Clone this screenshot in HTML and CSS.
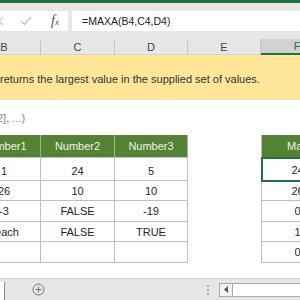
FILE: index.html
```html
<!DOCTYPE html>
<html lang="en">
<head>
  <meta charset="UTF-8" />
  <title>MAXA</title>
  <link rel="stylesheet" href="styles.css">
</head>
<body>
  <div class="ribbon-edge"></div>

  <div class="formula-bar">
    <div class="fx-buttons">
      <svg class="fx-cancel" width="10" height="10" viewBox="0 0 10 10"><path d="M1 1 L9 9 M9 1 L1 9" /></svg>
      <svg class="fx-enter" width="12" height="10" viewBox="0 0 12 10"><path d="M1 5 L4.5 8.5 L11 1" /></svg>
      <span class="fx-label"><i>f</i><small>x</small></span>
    </div>
    <div class="formula-input">=MAXA(B4,C4,D4)</div>
  </div>

  <div class="col-heads">
    <div class="col-head">B</div>
    <div class="col-head">C</div>
    <div class="col-head">D</div>
    <div class="col-head">E</div>
    <div class="col-head active">F</div>
  </div>

  <div class="banner">returns the largest value in the supplied set of values.</div>
  <div class="syntax">2], ...)</div>

  <div class="sheet">
    <div class="data-table">
      <div class="cell head">Number1</div>
      <div class="cell head">Number2</div>
      <div class="cell head">Number3</div>
      <div class="cell">1</div><div class="cell">24</div><div class="cell">5</div>
      <div class="cell">26</div><div class="cell">10</div><div class="cell">10</div>
      <div class="cell">-3</div><div class="cell">FALSE</div><div class="cell">-19</div>
      <div class="cell">peach</div><div class="cell">FALSE</div><div class="cell">TRUE</div>
      <div class="cell"></div><div class="cell"></div><div class="cell"></div>
    </div>
    <div class="result-table">
      <div class="cell head">Max</div>
      <div class="cell selected">24</div>
      <div class="cell">26</div>
      <div class="cell">0</div>
      <div class="cell">1</div>
      <div class="cell">0</div>
    </div>
  </div>

  <div class="sheet-bar">
    <div class="sheet-tab"></div>
    <svg class="add-sheet" width="13" height="13" viewBox="0 0 13 13">
      <circle cx="6.5" cy="6.5" r="5.5" />
      <path d="M6.5 3.5 V9.5 M3.5 6.5 H9.5" />
    </svg>
    <div class="grip"><span></span><span></span><span></span></div>
    <div class="hscroll">
      <div class="hscroll-btn">
        <svg width="5" height="7" viewBox="0 0 5 7"><path d="M4 0 L0 3.5 L4 7 Z" /></svg>
      </div>
      <div class="hscroll-track"></div>
    </div>
  </div>
</body>
</html>
```

FILE: styles.css
```css
body {
  margin: 0;
  width: 300px;
  height: 300px;
  overflow: hidden;
  font-family: "Liberation Sans", Arial, sans-serif;
  font-size: 11px;
  color: #262626;
  background: white;
}
.ribbon-edge {
  height: 3px;
  background: #217346;
}
.formula-bar {
  display: flex;
  gap: 4px;
  height: 36px;
  padding: 8px 0;
  box-sizing: border-box;
  background: #e6e6e6;
}
.fx-buttons {
  width: 68px;
  display: flex;
  align-items: center;
  background: white;
  overflow: hidden;
}
.fx-cancel {
  margin-left: -6px;
  fill: none;
  stroke: #c8c8c8;
  stroke-width: 1.3;
}
.fx-enter {
  margin-left: 16px;
  fill: none;
  stroke: #c4c4c4;
  stroke-width: 1.4;
}
.fx-label {
  margin-left: 19px;
  font-family: "Liberation Serif", serif;
  font-size: 14px;
  color: #555;
}
.fx-label small {
  font-size: 9px;
  font-style: italic;
}
.formula-input {
  flex: 1;
  display: flex;
  align-items: center;
  padding-left: 10px;
  background: white;
  font-size: 10.5px;
  color: #222;
}
.col-heads {
  display: grid;
  grid-template-columns: 73px 74px 73px 73px 73px;
  margin-left: -32px;
  height: 16px;
  background: #e6e6e6;
}
.col-head {
  display: flex;
  align-items: center;
  justify-content: center;
  border-right: 1px solid #c6c6c6;
  border-bottom: 1px solid #d4d4d4;
  color: #444;
}
.col-head.active {
  background: #d2d2d2;
  color: #217346;
  border-bottom: 2px solid #217346;
}
.banner {
  display: flex;
  align-items: center;
  height: 45px;
  padding-top: 2px;
  box-sizing: border-box;
  background: #ffe699;
  color: #333;
  font-size: 11px;
  white-space: nowrap;
}
.syntax {
  height: 35px;
  padding-top: 12px;
  box-sizing: border-box;
  margin-left: -3px;
  color: #7f7f7f;
  font-size: 11px;
}
.sheet {
  display: grid;
  grid-template-columns: 73px 74px 73px 73px 73px;
  margin-left: -32px;
}
.data-table,
.result-table {
  display: grid;
  grid-template-rows: 23px 23px 20px 21px 20px 21px;
}
.data-table {
  grid-column: 1 / span 3;
  grid-template-columns: 73px 74px 73px;
}
.result-table {
  grid-column: 5;
  border-left: 1px solid #bfbfbf;
}
.cell {
  display: flex;
  align-items: center;
  justify-content: center;
  border-right: 1px solid #bfbfbf;
  border-bottom: 1px solid #bfbfbf;
  white-space: nowrap;
}
.cell.head {
  background: #548235;
  color: #eef4e6;
  border-right-color: #9fb98a;
}
.cell.selected {
  outline: 2px solid #217346;
  outline-offset: -1px;
  padding-top: 2px;
}
.data-table .cell:nth-child(n+4):nth-child(-n+6) {
  padding-top: 3px;
}
.sheet-bar {
  display: flex;
  align-items: center;
  height: 22px;
  margin-top: 15px;
  background: #e6e6e6;
  border-top: 1px solid #d6d6d6;
  box-sizing: border-box;
}
.sheet-tab {
  align-self: stretch;
  width: 4px;
  margin-top: 3px;
  background: white;
  border-right: 1px solid #8a8a8a;
}
.add-sheet {
  margin-left: 27px;
  fill: none;
  stroke: #7a7a7a;
  stroke-width: 1;
}
.grip {
  display: flex;
  flex-direction: column;
  gap: 2px;
  margin-left: 162px;
}
.grip span {
  width: 2px;
  height: 2px;
  background: #b0b0b0;
}
.hscroll {
  display: flex;
  height: 12px;
  margin-left: 10px;
  flex: 1;
  border: 1px solid #ababab;
  border-right: none;
  background: white;
}
.hscroll-btn {
  width: 12px;
  display: flex;
  align-items: center;
  justify-content: center;
  border-right: 1px solid #ababab;
  background: #f3f3f3;
}
.hscroll-btn svg {
  fill: #555;
}
.hscroll-track {
  flex: 1;
}
```
